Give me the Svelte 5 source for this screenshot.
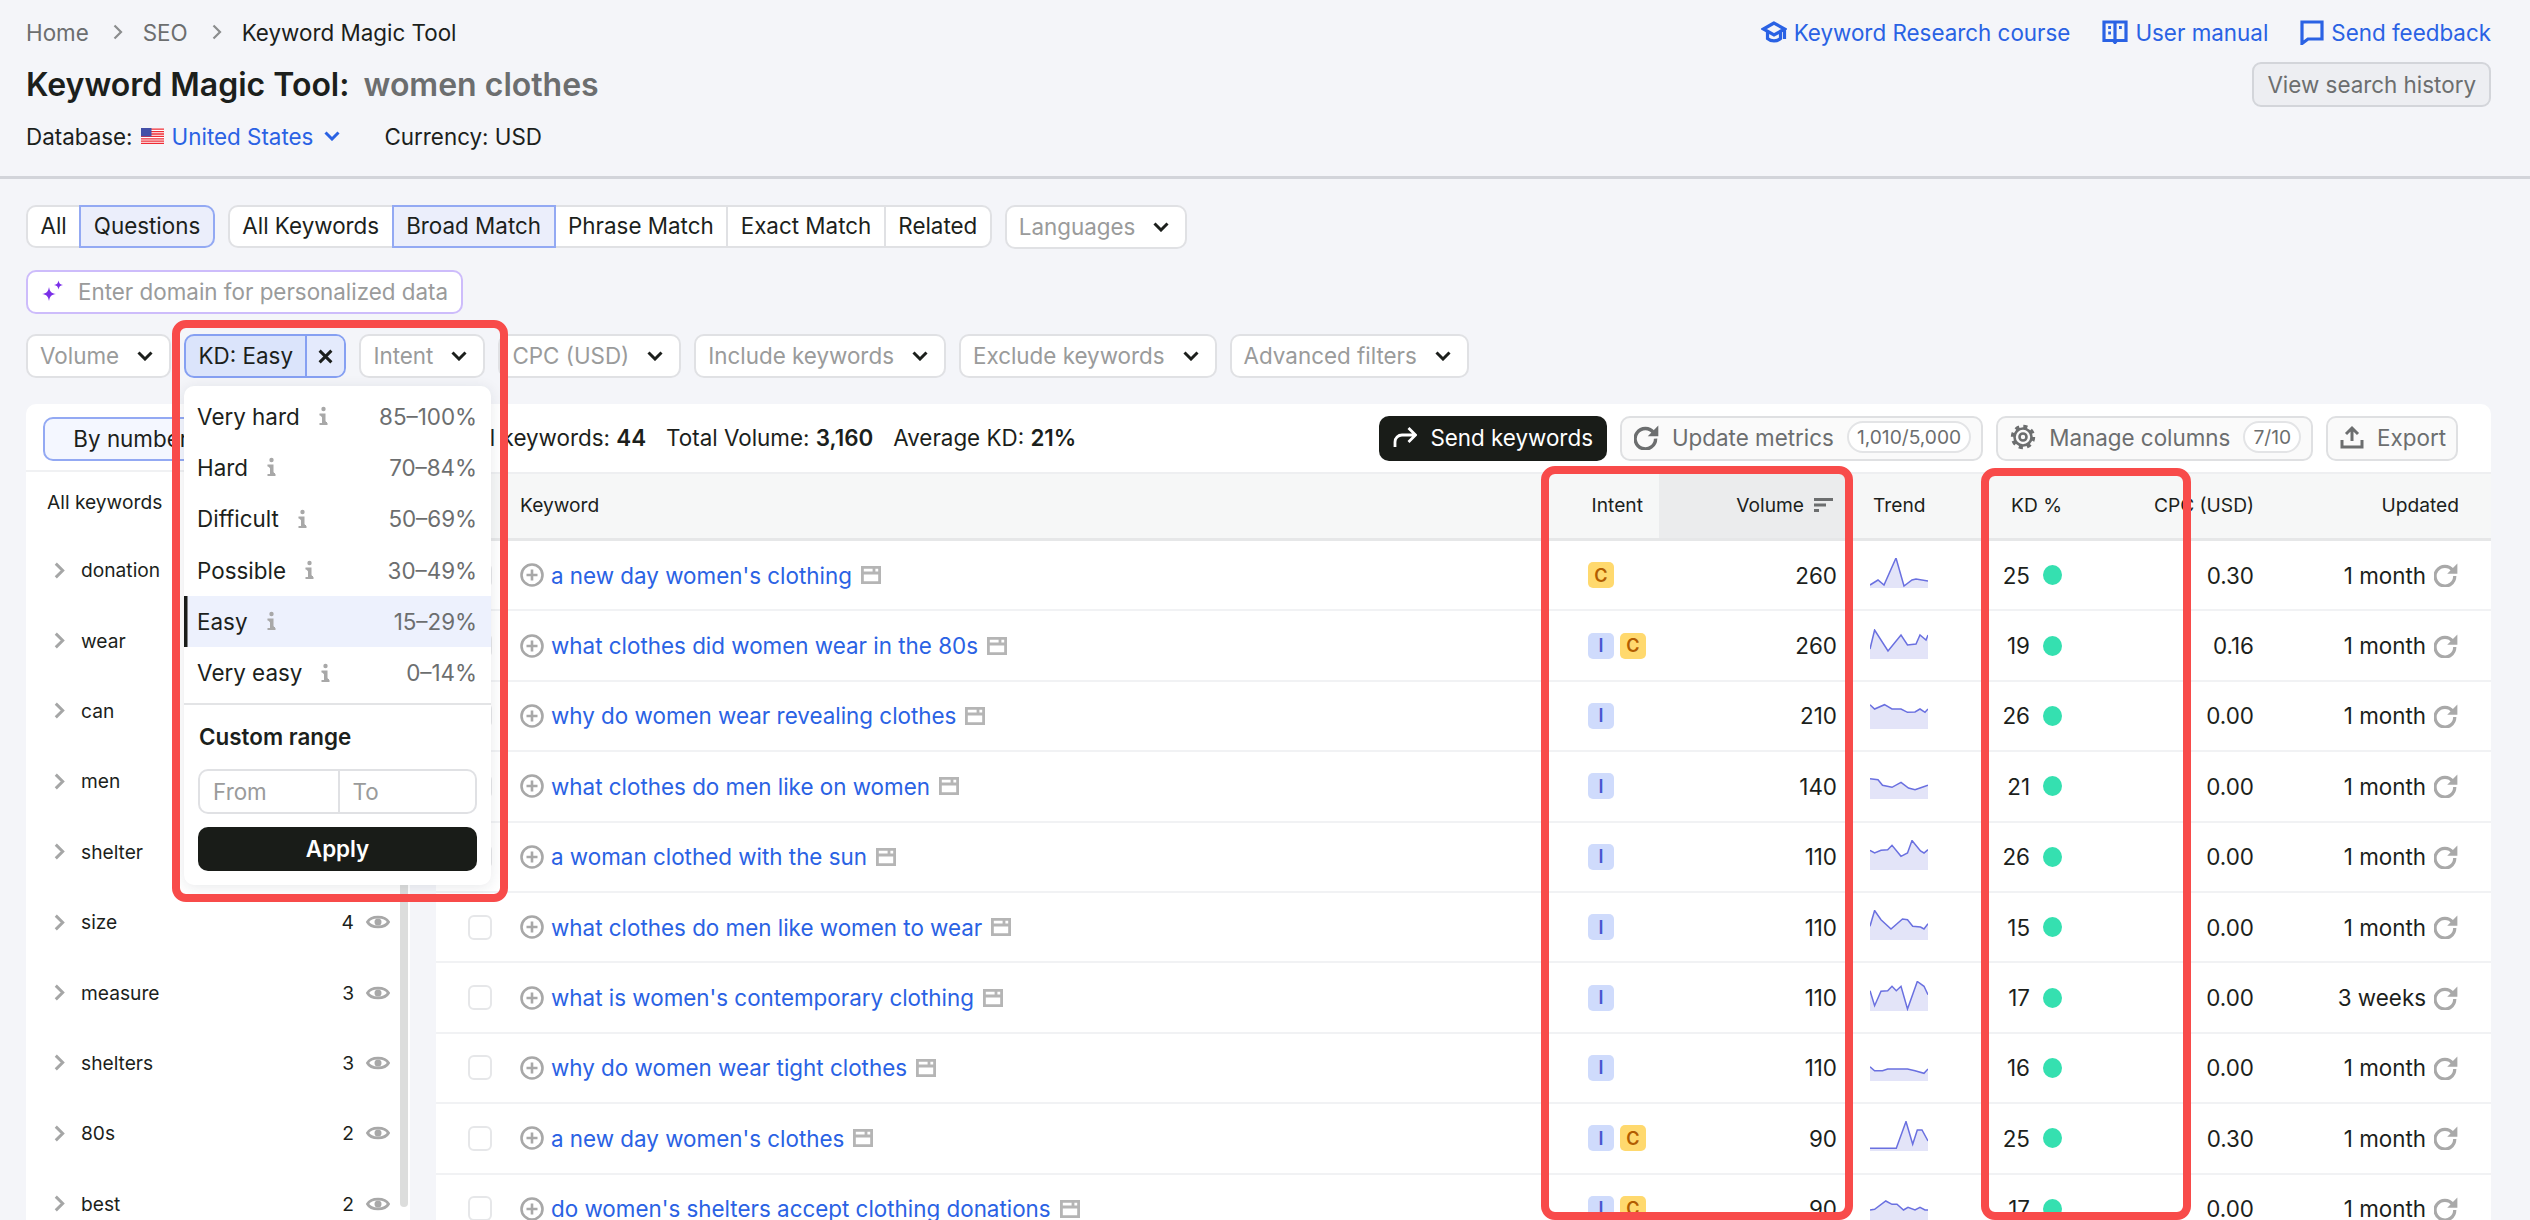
<script>
  const crumbs = ['Home', 'SEO'];
  const types = [['All', false], ['Questions', true]];
  const matches = [['All Keywords', false], ['Broad Match', true], ['Phrase Match', false], ['Exact Match', false], ['Related', false]];
  const moreFilters = ['CPC (USD)', 'Include keywords', 'Exclude keywords', 'Advanced filters'];

  const kdLevels = [
    { label: 'Very hard', range: '85–100%' },
    { label: 'Hard', range: '70–84%' },
    { label: 'Difficult', range: '50–69%' },
    { label: 'Possible', range: '30–49%' },
    { label: 'Easy', range: '15–29%', active: true },
    { label: 'Very easy', range: '0–14%' }
  ];

  // the counts of the first rows sit behind the KD popup
  const groups = [
    ['donation'], ['wear'], ['can'], ['men'], ['shelter'],
    ['size', 4], ['measure', 3], ['shelters', 3], ['80s', 2], ['best', 2]
  ];

  const rows = [
    { kw: "a new day women's clothing", intent: ['C'], vol: 260, kd: 25, cpc: '0.30', upd: '1 month',
      trend: [[0,27],[8,22],[14,27],[26,0],[34,28],[42,22],[46,21],[58,23]] },
    { kw: 'what clothes did women wear in the 80s', intent: ['I', 'C'], vol: 260, kd: 19, cpc: '0.16', upd: '1 month',
      trend: [[0,20],[4.6,1],[18,22],[31,6],[37.5,16],[46,15],[50,6],[56,11],[58,6]] },
    { kw: 'why do women wear revealing clothes', intent: ['I'], vol: 210, kd: 26, cpc: '0.00', upd: '1 month',
      trend: [[0,5.7],[4.6,10],[14.5,5.7],[22,10],[31,10],[37.5,13.3],[45,13],[50,10],[55,13.3],[58,10]] },
    { kw: 'what clothes do men like on women', intent: ['I'], vol: 140, kd: 21, cpc: '0.00', upd: '1 month',
      trend: [[0,9.7],[8,10.7],[12.5,16.3],[22,18.3],[31,13.3],[38.5,19],[45,20.7],[50,19],[58,16.3]] },
    { kw: 'a woman clothed with the sun', intent: ['I'], vol: 110, kd: 26, cpc: '0.00', upd: '1 month',
      trend: [[0,10.3],[4.6,13],[11,10.3],[17.7,9.7],[22,5.3],[31,16.3],[37.5,13],[42,0.5],[50.5,11],[54,13],[58,9.7]] },
    { kw: 'what clothes do men like women to wear', intent: ['I'], vol: 110, kd: 15, cpc: '0.00', upd: '1 month',
      trend: [[0,16.3],[4.6,0.5],[11,9.7],[21,19],[32.5,9],[37.5,9.7],[42.7,16.3],[50.5,17],[54,19],[58,13.7]] },
    { kw: "what is women's contemporary clothing", intent: ['I'], vol: 110, kd: 17, cpc: '0.00', upd: '3 weeks',
      trend: [[0,9.7],[4.6,24.7],[11,10.3],[17.7,9.7],[22,5.3],[26.3,9.7],[31,5.3],[37.5,28],[47.3,0.5],[54,5.3],[58,13.7]] },
    { kw: 'why do women wear tight clothes', intent: ['I'], vol: 110, kd: 16, cpc: '0.00', upd: '1 month',
      trend: [[0,15.7],[4.6,19.7],[12.5,19.7],[17.7,18],[37.5,18],[45,19.7],[54,22.3],[58,18]] },
    { kw: "a new day women's clothes", intent: ['I', 'C'], vol: 90, kd: 25, cpc: '0.30', upd: '1 month',
      trend: [[0,27.3],[26.3,27.3],[36,0.5],[42.7,23.3],[47.3,9],[52,9],[58,20]] },
    { kw: "do women's shelters accept clothing donations", intent: ['I', 'C'], vol: 90, kd: 17, cpc: '0.00', upd: '1 month',
      trend: [[0,18],[4.6,17.3],[15.8,9],[22,12.3],[27,12.3],[33.5,18],[38,15.3],[45,18],[50,15.3],[55,18],[58,18]] }
  ];

  function line(pts) {
    return pts.map(p => p.join(',')).join(' ');
  }

  function area(pts) {
    return `0,30 ${line(pts)} 58,30`;
  }
</script>

{#snippet chevron()}
  <svg class="chev" viewBox="0 0 16 10"><path d="M1.500 1.500 8 8l6.500-6.500" /></svg>
{/snippet}

{#snippet refresh()}
  <svg class="refresh" viewBox="2 1 22 22">
    <path class="arc" d="M19.300 7.800A9 9 0 1 0 21 13" />
    <path class="tip" d="M23.400 1.500v9.300h-9.300z" />
  </svg>
{/snippet}

<div class="page">
  <header class="head">
    <div class="head-left">
      <nav class="crumbs">
        {#each crumbs as c}
          <span class="crumb">{c}</span>
          <svg class="crumb-sep" viewBox="0 0 10 16"><path d="M1.500 1.500 8 8l-6.500 6.500" /></svg>
        {/each}
        <span>Keyword Magic Tool</span>
      </nav>
      <h1><b>Keyword Magic Tool:</b> <span>women clothes</span></h1>
      <div class="db">
        <span>Database:</span>
        <svg class="flag" viewBox="0 0 23 16">
          <rect width="23" height="16" fill="#fff" />
          <path d="M0 1.200h23M0 3.600h23M0 6h23M0 8.400h23M0 10.800h23M0 13.200h23M0 15.300h23" stroke="#ee2b35" stroke-width="1.300" />
          <rect width="10.500" height="8.400" fill="#4450a8" />
        </svg>
        <a class="db-link">United States</a>
        <svg class="chev blue" viewBox="0 0 16 10"><path d="M1.500 1.500 8 8l6.500-6.500" /></svg>
        <span class="currency">Currency: USD</span>
      </div>
    </div>
    <div class="head-right">
      <div class="links">
        <a>
          <svg viewBox="0 0 26 24"><path d="M13 3 2.500 9 13 15l10.500-6zM6.500 12v6.500c3.500 3.200 9.500 3.200 13 0V12M23.500 9v10" /></svg>
          Keyword Research course
        </a>
        <a>
          <svg viewBox="0 0 26 24"><path d="M2 2h22v18.500h-9.500l-1.500 2-1.500-2H2zM13 2v18.500M6.200 7.500h2.800M6.200 13h2.800M17 7.500h2.800" /></svg>
          User manual
        </a>
        <a>
          <svg class="bubble" viewBox="0 0 24 26"><path d="M2 3h20v17H8l-6 4.500z" /></svg>
          Send feedback
        </a>
      </div>
      <button class="history">View search history</button>
    </div>
  </header>

  <main class="content">
    <div class="bar">
      <div class="seg">
        {#each types as [t, on]}
          <span class="seg-item" class:on>{t}</span>
        {/each}
      </div>
      <div class="seg">
        {#each matches as [t, on]}
          <span class="seg-item" class:on>{t}</span>
        {/each}
      </div>
      <span class="drop">Languages {@render chevron()}</span>
    </div>

    <div class="bar">
      <div class="domain">
        <svg viewBox="1 1 22 22"><path d="M9 8c.8 4.700 2.300 6.200 7 7-4.700.8-6.200 2.300-7 7-.8-4.700-2.300-6.200-7-7 4.700-.8 6.200-2.300 7-7zM18.500 1.500c.5 2.900 1.600 4 4.500 4.500-2.900.5-4 1.600-4.500 4.500-.5-2.900-1.600-4-4.500-4.500 2.900-.5 4-1.600 4.500-4.500z" /></svg>
        Enter domain for personalized data
      </div>
    </div>

    <div class="bar filters">
      <span class="drop">Volume {@render chevron()}</span>
      <div class="kd">
        <div class="kd-tag">
          <span class="kd-text">KD: Easy</span>
          <span class="kd-x"><svg viewBox="0 0 14 14"><path d="M1.500 1.500l11 11M12.500 1.500l-11 11" /></svg></span>
        </div>
        <div class="menu">
          {#each kdLevels as l}
            <div class="menu-item" class:active={l.active}>
              <span>{l.label}</span>
              <svg class="info" viewBox="0 0 10 20"><circle cx="5.500" cy="3" r="2.200" /><path d="M1.500 8.500h5V17h2.500M1.500 18h8M5 9v8" /></svg>
              <span class="range">{l.range}</span>
            </div>
          {/each}
          <div class="custom">
            <div class="custom-title">Custom range</div>
            <div class="range-inputs">
              <span>From</span>
              <span>To</span>
            </div>
            <button class="apply">Apply</button>
          </div>
        </div>
      </div>
      <span class="drop">Intent {@render chevron()}</span>
      {#each moreFilters as f}
        <span class="drop">{f} {@render chevron()}</span>
      {/each}
    </div>

    <div class="panels">
      <aside class="side">
        <div class="side-top">
          <div class="toggle">
            <span class="on">By number</span>
            <span></span>
          </div>
        </div>
        <div class="side-all">
          <span>All keywords</span>
        </div>
        {#each groups as [name, count]}
          <div class="side-row">
            <svg class="side-chev" viewBox="0 0 10 16"><path d="M1.500 1.500 8 8l-6.500 6.500" /></svg>
            <span class="side-name">{name}</span>
            <span>{count ?? ''}</span>
            <svg class="eye" viewBox="0 0 24 18">
              <path d="M1.500 9C5 2.500 19 2.500 22.500 9 19 15.500 5 15.500 1.500 9z" />
              <circle cx="12" cy="9" r="3.500" />
            </svg>
          </div>
        {/each}
        <div class="scroll"></div>
      </aside>

      <section class="table">
        <div class="stats">
          <div class="totals">
            <span>All keywords: <b>44</b></span>
            <span>Total Volume: <b>3,160</b></span>
            <span>Average KD: <b>21%</b></span>
          </div>
          <button class="send">
            <svg viewBox="0 0 24 22"><path d="M2 21v-5a7 7 0 0 1 7-7h13M15.500 2l7 7-7 7" /></svg>
            Send keywords
          </button>
          <button class="tool">
            {@render refresh()}
            Update metrics
            <span class="pill">1,010/5,000</span>
          </button>
          <button class="tool">
            <svg class="gear" viewBox="0 0 26 26">
              <circle cx="13" cy="13" r="8.500" />
              <circle class="teeth" cx="13" cy="13" r="10.500" />
              <circle cx="13" cy="13" r="3.500" />
            </svg>
            Manage columns
            <span class="pill">7/10</span>
          </button>
          <button class="tool">
            <svg class="upload" viewBox="0 0 24 24"><path d="M12 16V3M6 9l6-6 6 6M2 15v7h20v-7" /></svg>
            Export
          </button>
        </div>

        <div class="trow thead">
          <span></span>
          <span class="c-kw">Keyword</span>
          <span class="c-intent">Intent</span>
          <span class="c-vol sorted">
            Volume
            <svg class="sort" viewBox="0 0 20 14"><path d="M0 1.500h19M0 7h12M0 12.500h5" /></svg>
          </span>
          <span class="c-trend">Trend</span>
          <span class="c-kd">KD %</span>
          <span class="c-cpc">CPC (USD)</span>
          <span class="c-upd">Updated</span>
        </div>

        {#each rows as r}
          <div class="trow">
            <span class="c-check"><i class="box"></i></span>
            <span class="c-kw">
              <svg class="plus" viewBox="0 0 24 24"><circle cx="12" cy="12" r="10.500" /><path d="M12 6.500v11M6.500 12h11" /></svg>
              <a>{r.kw}</a>
              <svg class="serp" viewBox="0 0 20 18"><path d="M1.400 1.400h17.200v15.200H1.400zM1.400 7h17.200M13 1.400V7" /></svg>
            </span>
            <span class="c-badges">
              {#each r.intent as i}
                <i class="badge {i}">{i}</i>
              {/each}
            </span>
            <span class="c-vol">{r.vol}</span>
            <span class="c-spark">
              <svg viewBox="0 0 58 30">
                <polygon points={area(r.trend)} fill="#e3e4f8" />
                <polyline points={line(r.trend)} fill="none" stroke="#6a70e0" stroke-width="1.500" />
              </svg>
            </span>
            <span class="c-kdval"><em>{r.kd}</em><i class="dot"></i></span>
            <span class="c-cpc">{r.cpc}</span>
            <span class="c-upd">{r.upd} {@render refresh()}</span>
          </div>
        {/each}
      </section>
    </div>
  </main>

  <div class="mark m-kd"></div>
  <div class="mark m-vol"></div>
  <div class="mark m-kdcol"></div>
</div>

<style>
  :global(body) {
    margin: 0;
    background: #f4f5f9;
  }

  .page {
    position: relative;
    height: 1220px;
    overflow: hidden;
    background: #f4f5f9;
    color: #1c1f1c;
    font-family: Inter, "Noto Sans", sans-serif;
    font-size: 22.400px;
  }

  svg {
    display: block;
    flex: none;
  }

  /* header */
  .head {
    display: flex;
    justify-content: space-between;
    height: 161px;
    padding: 15px 39px 0 26px;
    border-bottom: 3px solid #d2d4da;
  }

  .crumbs {
    display: flex;
    align-items: center;
    height: 34px;
  }

  .crumb {
    color: #6c6e6f;
  }

  .crumb-sep {
    width: 10px;
    height: 16px;
    margin: 0 20px 0 24px;
    fill: none;
    stroke: #8b8d8e;
    stroke-width: 2.200;
  }

  h1 {
    margin: 16px 0 0;
    font-size: 32px;
    line-height: 40px;
    font-weight: 600;
  }

  h1 b {
    font-weight: 600;
    margin-right: 6px;
  }

  h1 span {
    color: #6c6e6f;
  }

  .db {
    display: flex;
    align-items: center;
    height: 34px;
    margin-top: 14px;
  }

  .flag {
    width: 23px;
    height: 16px;
    margin: 0 8px;
  }

  .db-link {
    color: #2a62e4;
  }

  .chev {
    width: 16px;
    height: 10px;
    fill: none;
    stroke: #1c1f1c;
    stroke-width: 3;
  }

  .chev.blue {
    stroke: #2a62e4;
    margin-left: 11px;
  }

  .currency {
    margin-left: 44px;
  }

  .head-right {
    display: flex;
    flex-direction: column;
    align-items: flex-end;
  }

  .links {
    display: flex;
    gap: 32px;
    height: 34px;
  }

  .links a {
    display: flex;
    align-items: center;
    gap: 7px;
    color: #2a62e4;
  }

  .links svg {
    width: 26px;
    height: 24px;
    fill: none;
    stroke: #2a62e4;
    stroke-width: 3.200;
  }

  .links .bubble {
    width: 24px;
    height: 26px;
  }

  .history {
    margin-top: 13px;
    height: 45px;
    padding: 0 13px;
    border: 2px solid #d3d5da;
    border-radius: 9px;
    background: #edeef2;
    color: #6c6e6f;
    font: inherit;
  }

  /* toolbars */
  .content {
    padding: 0 39px 0 26px;
  }

  .bar {
    display: flex;
    gap: 13px;
    margin-top: 20px;
  }

  .bar:first-child {
    margin-top: 26px;
    margin-bottom: 21px;
  }

  .seg {
    display: flex;
    height: 43px;
  }

  .seg-item {
    display: flex;
    align-items: center;
    padding: 0 12.500px 2px;
    margin-left: -2px;
    border: 2px solid #e0e1e4;
    background: #fff;
  }

  .seg-item:first-child {
    margin-left: 0;
    border-radius: 10px 0 0 10px;
  }

  .seg-item:last-child {
    border-radius: 0 10px 10px 0;
  }

  .seg-item.on {
    position: relative;
    background: #ebeefb;
    border-color: #93a9f3;
  }

  .drop {
    display: flex;
    align-items: center;
    justify-content: space-between;
    gap: 18px;
    height: 44px;
    padding: 0 16px 2px 12px;
    box-sizing: border-box;
    border: 2px solid #e0e1e4;
    border-radius: 10px;
    background: #fff;
    color: #9a9b9b;
  }

  .drop .chev {
    margin-top: 2px;
  }

  .domain {
    display: flex;
    align-items: center;
    gap: 15px;
    width: 437px;
    height: 44px;
    padding: 0 0 2px 13px;
    box-sizing: border-box;
    border: 2px solid #cdbcfb;
    border-radius: 10px;
    background: #fff;
    color: #9a9b9b;
  }

  .domain svg {
    width: 22px;
    height: 22px;
    fill: #7a2fe8;
  }

  .filters {
    height: 44px;
  }

  .kd {
    position: relative;
  }

  .kd-tag {
    display: flex;
    height: 44px;
    box-sizing: border-box;
    border: 2px solid #86a0f2;
    border-radius: 10px;
    background: #dbe4fb;
  }

  .kd-text {
    display: flex;
    align-items: center;
    padding: 0 12.500px 2px;
    border-right: 2px solid #86a0f2;
  }

  .kd-x {
    display: flex;
    align-items: center;
    padding: 0 11px;
    background: #e4eafc;
    border-radius: 0 8px 8px 0;
  }

  .kd-x svg {
    width: 15px;
    height: 15px;
    fill: none;
    stroke: #1c1f1c;
    stroke-width: 2.800;
  }

  /* KD popup */
  .menu {
    position: absolute;
    z-index: 5;
    top: 52px;
    left: 0;
    width: 307px;
    height: 499px;
    padding-top: 5px;
    box-sizing: border-box;
    border-radius: 10px;
    background: #fff;
    box-shadow: 0 2px 14px rgba(30, 35, 60, 0.1);
  }

  .menu-item {
    display: flex;
    align-items: center;
    height: 51.300px;
    padding: 0 14px 1px 13px;
    box-sizing: border-box;
  }

  .menu-item.active {
    background: #edf1fd;
    box-shadow: inset 3.500px 0 0 #1a1c19;
  }

  .info {
    width: 10px;
    height: 20px;
    margin-left: 18px;
    fill: #a8a8a8;
    stroke: #a8a8a8;
    stroke-width: 2;
  }

  .info circle {
    stroke: none;
  }

  .range {
    margin-left: auto;
    color: #6c6e6f;
  }

  .custom {
    margin-top: 4px;
    padding: 19px 14px 0;
    border-top: 2px solid #e3e4e6;
  }

  .custom-title {
    padding-left: 1px;
    font-weight: 600;
    line-height: 26px;
  }

  .range-inputs {
    display: grid;
    grid-template-columns: 1fr 1fr;
    height: 45px;
    margin-top: 19px;
    box-sizing: border-box;
    border: 2px solid #e0e1e4;
    border-radius: 10px;
    color: #9a9b9b;
  }

  .range-inputs span {
    display: flex;
    align-items: center;
    padding-left: 13px;
  }

  .range-inputs span + span {
    border-left: 2px solid #e0e1e4;
  }

  .apply {
    width: 100%;
    height: 44px;
    margin-top: 13px;
    border: 0;
    border-radius: 10px;
    background: #191c18;
    color: #fff;
    font: inherit;
    font-weight: 600;
  }

  /* panels */
  .panels {
    display: flex;
    gap: 26px;
    margin-top: 26px;
    height: 817px;
  }

  .side {
    position: relative;
    width: 384px;
    flex: none;
    overflow: hidden;
    border-radius: 10px 10px 0 0;
    background: #fff;
    font-size: 19.200px;
  }

  .side-top {
    height: 68px;
    padding: 13px 16px 0 17px;
    box-sizing: border-box;
    border-bottom: 2px solid #f0f1f3;
  }

  .toggle {
    display: flex;
    height: 44px;
    font-size: 22.400px;
  }

  .toggle span {
    flex: 1;
    display: flex;
    align-items: center;
    justify-content: center;
    padding-bottom: 2px;
    box-sizing: border-box;
    border: 2px solid #e0e1e4;
  }

  .toggle .on {
    border-color: #93a9f3;
    border-radius: 10px 0 0 10px;
    background: #f4f7ff;
  }

  .side-all {
    display: flex;
    align-items: center;
    height: 63px;
    padding: 0 52px 3px 21px;
    box-sizing: border-box;
  }

  .side-row {
    display: flex;
    align-items: center;
    height: 70.400px;
    padding: 0 20px 0 28px;
    box-sizing: border-box;
  }

  .side-chev {
    width: 11px;
    height: 17px;
    fill: none;
    stroke: #a5a6a6;
    stroke-width: 2.800;
  }

  .side-name {
    flex: 1;
    margin-left: 16px;
  }

  .eye {
    width: 24px;
    height: 18px;
    margin-left: 12px;
    fill: none;
    stroke: #a8a8a8;
    stroke-width: 2.800;
  }

  .eye circle {
    fill: #a8a8a8;
    stroke: none;
  }

  .scroll {
    position: absolute;
    top: 60px;
    bottom: 14px;
    right: 2px;
    width: 8px;
    border-radius: 4px;
    background: #dcdddc;
  }

  /* table */
  .table {
    flex: 1;
    overflow: hidden;
    border-radius: 10px 10px 0 0;
    background: #fff;
  }

  .stats {
    display: flex;
    align-items: center;
    gap: 13px;
    height: 70px;
    padding: 0 33px 0 33px;
    box-sizing: border-box;
    border-bottom: 2px solid #eeeff1;
  }

  .totals {
    display: flex;
    gap: 20px;
    margin-right: auto;
    padding-bottom: 2px;
  }

  .totals b {
    font-weight: 600;
  }

  .send,
  .tool {
    display: flex;
    align-items: center;
    height: 45px;
    box-sizing: border-box;
    border-radius: 10px;
    font: inherit;
    padding-bottom: 2px;
  }

  .send {
    gap: 13px;
    padding: 0 14px 2px;
    border: 0;
    background: #191c18;
    color: #fff;
  }

  .send svg {
    width: 24px;
    height: 22px;
    fill: none;
    stroke: #fff;
    stroke-width: 2.800;
  }

  .tool {
    gap: 13px;
    padding: 0 10px 2px 12px;
    border: 2px solid #dfe0e2;
    background: #fafafa;
    color: #6c6e6f;
  }

  .tool .refresh {
    width: 25px;
    height: 25px;
  }

  .gear {
    width: 26px;
    height: 26px;
    fill: none;
    stroke: #6c6e6f;
    stroke-width: 2.600;
  }

  .gear .teeth {
    stroke-width: 3.400;
    stroke-dasharray: 4.100 4.147;
  }

  .upload {
    width: 24px;
    height: 24px;
    fill: none;
    stroke: #6c6e6f;
    stroke-width: 3;
  }

  .pill {
    display: flex;
    align-items: center;
    height: 32px;
    padding: 0 8px;
    border: 2px solid #e3e4e6;
    border-radius: 16px;
    background: #fff;
    font-size: 19.200px;
    box-sizing: border-box;
  }

  .trow {
    display: grid;
    grid-template-columns: 74px 1060px 89px 192px 139px 80px 192px 229px;
    height: 70.400px;
    box-sizing: border-box;
    border-bottom: 2px solid #f1f2f4;
  }

  .trow > span {
    display: flex;
    align-items: center;
    box-sizing: border-box;
  }

  .thead {
    height: 67px;
    background: #f6f7f7;
    border-bottom: 3px solid #e6e7e8;
    font-size: 19.200px;
  }

  .thead > span {
    padding-bottom: 2px;
  }

  .c-check {
    justify-content: flex-end;
    padding-right: 18px;
  }

  .box {
    width: 24px;
    height: 25px;
    box-sizing: border-box;
    border: 2px solid #e6e7e9;
    border-radius: 6px;
  }

  .c-kw {
    gap: 7px;
    padding-left: 10px;
  }

  .c-kw a {
    color: #2a62e4;
  }

  .plus {
    width: 24px;
    height: 24px;
    fill: none;
    stroke: #a8a8a8;
    stroke-width: 2.600;
  }

  .serp {
    width: 20px;
    height: 18px;
    margin-left: 2px;
    fill: none;
    stroke: #b5b5b5;
    stroke-width: 2.800;
  }

  .c-intent {
    justify-content: flex-end;
    padding-right: 16px;
  }

  .c-badges {
    gap: 6px;
    padding-left: 18px;
  }

  .badge {
    display: flex;
    align-items: center;
    justify-content: center;
    width: 26px;
    height: 26px;
    border-radius: 5px;
    font-style: normal;
    font-size: 18px;
    font-weight: 600;
  }

  .badge.I {
    background: #cfdbfc;
    color: #4a56cf;
  }

  .badge.C {
    background: #ffd96e;
    color: #b25c00;
  }

  .c-vol {
    justify-content: flex-end;
    padding-right: 14px;
    gap: 10px;
  }

  .sorted {
    background: #ebeced;
    padding-right: 17px;
  }

  .sort {
    width: 20px;
    height: 14px;
    fill: none;
    stroke: #6c6e6f;
    stroke-width: 3;
  }

  .c-trend {
    padding-left: 22px;
  }

  .c-spark {
    padding: 0 0 4px 19px;
  }

  .c-spark svg {
    width: 58px;
    height: 30px;
  }

  .c-kd {
    padding-left: 21px;
  }

  .c-kdval em {
    width: 40px;
    font-style: normal;
    text-align: right;
  }

  .dot {
    width: 19px;
    height: 20px;
    margin-left: 13px;
    border-radius: 50%;
    background: #35e0b0;
  }

  .c-cpc {
    justify-content: flex-end;
    padding-right: 8px;
  }

  .c-upd {
    justify-content: flex-end;
    gap: 8px;
    padding-right: 33px;
  }

  .thead .c-upd {
    padding-right: 32px;
  }

  .refresh {
    width: 24px;
    height: 24px;
    fill: none;
    stroke: #a9a9a9;
    stroke-width: 3;
  }

  .refresh .tip {
    stroke: none;
    fill: #a9a9a9;
  }

  .tool .refresh {
    stroke: #6c6e6f;
  }

  .tool .refresh .tip {
    fill: #6c6e6f;
  }

  /* red highlight frames drawn over the shot */
  .mark {
    position: absolute;
    z-index: 10;
    box-sizing: border-box;
    border: 8px solid #f84b4a;
    border-radius: 14px;
    pointer-events: none;
  }

  .m-kd {
    left: 172px;
    top: 320px;
    width: 336px;
    height: 582px;
  }

  .m-vol {
    left: 1541px;
    top: 466px;
    width: 312px;
    height: 754px;
  }

  .m-kdcol {
    left: 1981px;
    top: 468px;
    width: 210px;
    height: 752px;
  }
</style>
